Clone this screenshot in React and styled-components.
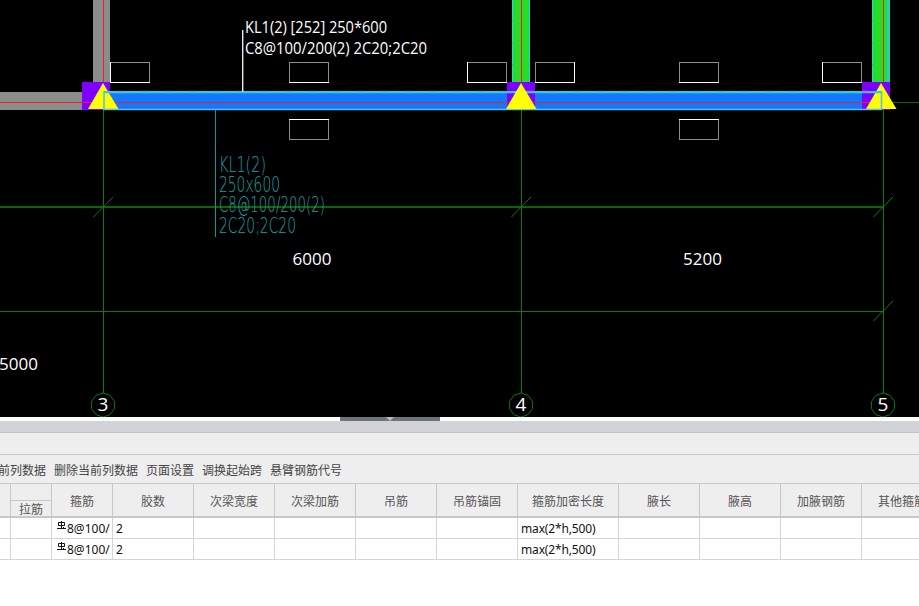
import React from "react";
import styled, { createGlobalStyle } from "styled-components";

const GlobalStyle = createGlobalStyle`
  html, body {
    margin: 0;
    padding: 0;
    background: #fff;
    overflow: hidden;
  }
`;

const Page = styled.div`
  width: 919px;
  height: 606px;
  overflow: hidden;
  background: #fff;
  font-family: "Noto Sans CJK SC", "Noto Sans", sans-serif;
`;

const Canvas = styled.svg`
  display: block;
  width: 919px;
  height: 417px;
  background: #000;
`;

const Splitter = styled.div`
  height: 4px;
  background: #fff;
  padding-left: 340px;
`;

const SplitHandle = styled.div`
  width: 100px;
  height: 4px;
  background: #6c757d;
  display: flex;
  justify-content: center;
`;

const SplitArrow = styled.div`
  width: 0;
  height: 0;
  border-left: 4px solid transparent;
  border-right: 4px solid transparent;
  border-top: 4px solid #b8bcc0;
`;

const TitleBand = styled.div`
  height: 11px;
  background: #d2d3d8;
  border-bottom: 1px solid #c2c3c8;
`;

const BlankBar = styled.div`
  height: 21px;
  background: #eeeeee;
  border-bottom: 1px solid #c8c8c8;
`;

const ToolBar = styled.div`
  height: 29px;
  box-sizing: border-box;
  padding-top: 1px;
  margin-left: -2px;
  background: #eeeeee;
  border-bottom: 1px solid #c8c8c8;
  display: flex;
  align-items: center;
  gap: 8px;
`;

const ToolItem = styled.span`
  font-size: 12px;
  color: #444;
  white-space: nowrap;
`;

const Grid = styled.div`
  display: grid;
  grid-template-columns: 11px 41px 61px repeat(5, 81px) 101px repeat(4, 81px);
  grid-template-rows: 17px 17px 21px 21px;
  width: 1000px;
`;

const HeadCell = styled.div`
  box-sizing: border-box;
  background: #eeeeee;
  color: #555;
  font-size: 12px;
  display: flex;
  align-items: center;
  justify-content: center;
  white-space: nowrap;
  overflow: hidden;
  border-right: 1px solid #c8c8c8;
  border-bottom: ${({ $top }) => ($top ? 1 : 2)}px solid #c8c8c8;
  grid-row: ${({ $row }) => $row || "1 / span 2"};
  grid-column: ${({ $col }) => $col || "auto"};
`;

const Cell = styled.div`
  box-sizing: border-box;
  background: #fff;
  color: #111;
  font-family: "Noto Sans", "Noto Sans CJK SC", sans-serif;
  font-size: 12px;
  letter-spacing: ${({ $tight }) => ($tight ? "-0.15px" : "0")};
  display: flex;
  align-items: center;
  padding-left: 3px;
  white-space: nowrap;
  overflow: hidden;
  border-right: 1px solid #d4d4d4;
  border-bottom: 1px solid #d4d4d4;
`;

const RebarMark = styled.svg`
  flex: none;
  width: 9px;
  height: 10px;
  margin: -4px 1px 0 2px;
`;

const cad = {
  grid: "#0a640a",
  axis: "#0c7a0c",
  wall: "#8c8c8c",
  red: "#ee2020",
  yellow: "#ffff00",
  purple: "#8000ff",
  green: "#28dc28",
  beam: "#1478ff",
};

const Rebar = () => (
  <RebarMark viewBox="0 0 9 10">
    <path d="M1.5 1.5h6v3h-6zM4.5 0v7M0 7.5h9M6 6l1.5 1.5" fill="none" stroke="#111" strokeWidth="1" />
  </RebarMark>
);

// small label boxes round the beam, each with its own mix of white and grey edges
const Box = ({ x, y, white }) => (
  <g fill="none" shapeRendering="crispEdges">
    <rect x={x + 0.5} y={y + 0.5} width={39} height={20} stroke="#8c8c8c" />
    {white.includes("t") && <path d={`M${x} ${y + 0.5}h40`} stroke="#fff" />}
    {white.includes("b") && <path d={`M${x} ${y + 20.5}h40`} stroke="#fff" />}
    {white.includes("l") && <path d={`M${x + 0.5} ${y}v21`} stroke="#fff" />}
    {white.includes("r") && <path d={`M${x + 39.5} ${y}v21`} stroke="#fff" />}
  </g>
);

const Triangle = ({ apex }) => (
  <polygon points={`${apex},83 ${apex - 15},109 ${apex + 15.5},109`} fill={cad.yellow} />
);

const Bubble = ({ x, label }) => (
  <g>
    <polygon
      points={Array.from({ length: 10 }, (_, i) => {
        const a = (Math.PI * 2 * i) / 10 + Math.PI / 2;
        return `${x + 12 * Math.cos(a)},${405 + 12 * Math.sin(a)}`;
      }).join(" ")}
      fill="#000"
      stroke="#087a08"
    />
    <text x={x} y={411} textAnchor="middle" fontFamily="Open Sans" fontSize="19" fill="#fff">
      {label}
    </text>
  </g>
);

const Drawing = () => (
  <Canvas viewBox="0 0 919 417">
    {/* axis lines */}
    <g shapeRendering="crispEdges">
      <path d="M0 207H883" stroke={cad.grid} strokeWidth="2" />
      <path d="M0 311.5H883" stroke={cad.axis} />
      <path d="M103.5 110V393M521.5 110V393M883.5 102V393" stroke={cad.axis} />
      <path d="M883 102.5h36" stroke={cad.grid} />
    </g>
    <path d="M93.5 217L113 197M511.5 217L531 197M873.5 217L893 197M873.5 321L893 301" stroke={cad.axis} />

    {/* walls and columns */}
    <rect x={93} y={0} width={17} height={82} fill={cad.wall} />
    <rect x={0} y={92} width={82} height={18} fill={cad.wall} />
    <rect x={512} y={0} width={18} height={82} fill={cad.green} />
    <rect x={872} y={0} width={18} height={82} fill={cad.green} />
    <rect x={887} y={0} width={3} height={82} fill="#20d0c0" />
    <path d="M512.5 0V82M529.5 0V82M872.5 0V82" stroke="#20d8d8" strokeDasharray="20 2" />
    <path d="M103.5 0V92M521.5 0V82M883.5 0V82" stroke={cad.red} shapeRendering="crispEdges" />

    {/* beam KL1 */}
    <rect x={103} y={92} width={779} height={18} fill={cad.beam} />
    <rect x={82} y={82} width={28} height={28} fill={cad.purple} />
    <rect x={507} y={82} width={28} height={28} fill={cad.purple} />
    <rect x={862} y={82} width={28} height={28} fill={cad.purple} />
    <path d="M0 102.5H880" stroke={cad.red} shapeRendering="crispEdges" />
    <Triangle apex={103} />
    <Triangle apex={881} />
    <path d="M104 92.5H881.5V109.5H104Z" fill="none" stroke="#58bdf0" strokeWidth="1.6" />
    <path d="M104 92H882" stroke="#22d4e0" strokeWidth="2" />
    <path d="M118 91.3H880" stroke="#9080e0" strokeDasharray="6 18" />
    <Triangle apex={521} />

    {/* label boxes */}
    <Box x={110} y={62} white="lb" />
    <Box x={289} y={62} white="b" />
    <Box x={467} y={62} white="lb" />
    <Box x={535} y={62} white="br" />
    <Box x={679} y={62} white="b" />
    <Box x={822} y={62} white="lb" />
    <Box x={289} y={119} white="t" />
    <Box x={679} y={119} white="t" />

    {/* leaders */}
    <path d="M242.7 30V92" stroke="#e8e8e8" strokeWidth="1.4" />
    <path d="M215.5 110V237" stroke="#0a9a9a" shapeRendering="crispEdges" />

    <g fontFamily="Open Sans" fontSize="16" fill="#fff">
      <text x={245} y={33} textLength={142} lengthAdjust="spacingAndGlyphs">KL1(2) [252] 250*600</text>
      <text x={245} y={54} textLength={182} lengthAdjust="spacingAndGlyphs">C8@100/200(2) 2C20;2C20</text>
    </g>

    {/* original annotation in the CAD stroke font */}
    <g fontFamily="DejaVu Sans" fontWeight="200" fontSize="22" fill="#10a4a4">
      <text x={219} y={172} textLength={47} lengthAdjust="spacingAndGlyphs">KL1(2)</text>
      <text x={219} y={192} textLength={61} lengthAdjust="spacingAndGlyphs">250x600</text>
      <text x={219} y={212} textLength={106} lengthAdjust="spacingAndGlyphs">C8@100/200(2)</text>
      <text x={219} y={233} textLength={77} lengthAdjust="spacingAndGlyphs">2C20;2C20</text>
    </g>

    <g fontFamily="Open Sans" fontSize="17" fill="#fff" textAnchor="middle">
      <text x={312} y={265}>6000</text>
      <text x={702.5} y={265}>5200</text>
      <text x={18.5} y={370}>5000</text>
    </g>

    <Bubble x={103} label="3" />
    <Bubble x={521} label="4" />
    <Bubble x={883} label="5" />
  </Canvas>
);

const columns = ["箍筋", "胶数", "次梁宽度", "次梁加筋", "吊筋", "吊筋锚固", "箍筋加密长度", "腋长", "腋高", "加腋钢筋", "其他箍筋"];

const tools = ["前列数据", "删除当前列数据", "页面设置", "调换起始跨", "悬臂钢筋代号"];

const rows = [0, 1];

export default function App() {
  return (
    <Page>
      <GlobalStyle />
      <Drawing />
      <Splitter>
        <SplitHandle>
          <SplitArrow />
        </SplitHandle>
      </Splitter>
      <TitleBand />
      <BlankBar />
      <ToolBar>
        {tools.map((t) => (
          <ToolItem key={t}>{t}</ToolItem>
        ))}
      </ToolBar>
      <Grid>
        <HeadCell />
        <HeadCell $row="1" $col="2" $top />
        <HeadCell $row="2" $col="2">拉筋</HeadCell>
        {columns.map((c, i) => (
          <HeadCell key={c} $col={i + 3}>{c}</HeadCell>
        ))}
        {rows.map((r) => (
          <React.Fragment key={r}>
            <Cell />
            <Cell />
            <Cell>
              <Rebar />8@100/
            </Cell>
            <Cell>2</Cell>
            <Cell />
            <Cell />
            <Cell />
            <Cell />
            <Cell $tight>max(2*h,500)</Cell>
            <Cell />
            <Cell />
            <Cell />
            <Cell />
          </React.Fragment>
        ))}
      </Grid>
    </Page>
  );
}
